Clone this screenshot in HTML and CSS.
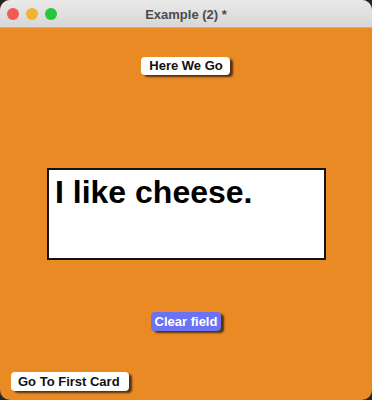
FILE: index.html
```html
<!DOCTYPE html>
<html>
<head>
<meta charset="utf-8">
<link rel="stylesheet" href="styles.css">
</head>
<body>
<div class="window">
  <div class="titlebar">
    <div class="lights">
      <span class="light red"></span>
      <span class="light yellow"></span>
      <span class="light green"></span>
    </div>
    <div class="title">Example (2) *</div>
  </div>
  <div class="card">
    <button class="btn btn-here">Here We Go</button>
    <div class="field">I like cheese.</div>
    <button class="btn btn-clear">Clear field</button>
    <button class="btn btn-first">Go To First Card</button>
  </div>
</div>
</body>
</html>
```
FILE: styles.css
```css
html, body {
  margin: 0;
  padding: 0;
  background: #262626;
}
body {
  font-family: "Liberation Sans", Arial, sans-serif;
}
.window {
  width: 372px;
  height: 400px;
  border-radius: 10px;
  overflow: hidden;
  display: flex;
  flex-direction: column;
  background: #ea8a25;
}
.titlebar {
  height: 27px;
  flex: none;
  border-bottom: 1px solid #b3b3b3;
  background: linear-gradient(#e9e9e9, #d7d7d7);
  position: relative;
  display: flex;
  align-items: center;
  justify-content: center;
}
.lights {
  position: absolute;
  left: 7px;
  top: 8px;
  display: flex;
  gap: 7px;
}
.light {
  width: 12px;
  height: 12px;
  border-radius: 50%;
  display: block;
}
.red { background: #ee5a54; }
.yellow { background: #efb432; }
.green { background: #27c43f; }
.title {
  font-size: 13px;
  font-weight: bold;
  color: #4b4b4b;
  padding-top: 1px;
}
.card {
  flex: 1;
  display: flex;
  flex-direction: column;
  align-items: center;
}
.btn {
  font-family: "Liberation Sans", Arial, sans-serif;
  font-weight: bold;
  font-size: 13px;
  border: none;
  border-radius: 4px;
  margin: 0;
  line-height: 15px;
  box-shadow: 3px 2px 2px rgba(30, 20, 10, 0.75);
  cursor: pointer;
}
.btn-here {
  margin-top: 29px;
  margin-left: -1px;
  height: 18px;
  padding: 1px 7px 2px 8px;
  background: #fff;
  color: #111;
}
.field {
  margin-top: 93px;
  margin-left: 1px;
  border: 2px solid #141414;
  background: #fff;
  box-sizing: content-box;
  padding: 4px 0 0 6px;
  width: 269px;
  height: 84px;
  font-size: 32px;
  font-weight: bold;
  line-height: 36px;
  color: #000;
}
.btn-clear {
  margin-top: 52px;
  height: 19px;
  padding: 2px 4px 2px 4px;
  background: #6b72f3;
  color: #fff;
}
.btn-first {
  margin-top: 41px;
  align-self: flex-start;
  margin-left: 11px;
  height: 19px;
  padding: 2px 9px 2px 7px;
  background: #fff;
  color: #111;
}
```
